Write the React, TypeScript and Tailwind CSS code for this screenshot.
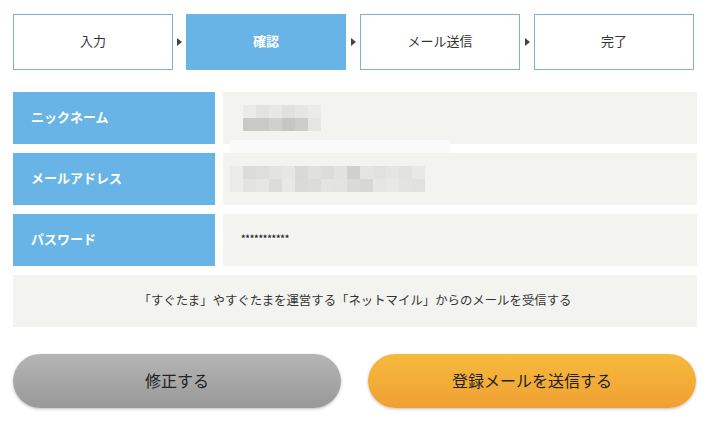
import React from "react";

const nickTop = ["#ebebe8", "#e3e3e0", "#e8e8e5", "#e1e1de", "#e6e6e3", "#ebebe8"];
const nickBot = ["#c9c9c6", "#c9c9c6", "#d0d0cd", "#c6c6c3", "#cdcdca", "#e6e6e3"];
const mailTop = ["#ececea", "#dcdcd9", "#dededb", "#e3e3e0", "#e6e6e3", "#d9d9d6", "#e0e0dd", "#dcdcd9", "#e2e2df", "#d0d0cd", "#e4e4e1", "#e1e1de", "#e5e5e2", "#e2e2df", "#e8e8e5"];
const mailBot = ["#ececea", "#e3e3e0", "#e6e6e3", "#dcdcd9", "#e8e8e5", "#dadad7", "#dcdcd9", "#e4e4e1", "#e3e3e0", "#dadad7", "#d7d7d4", "#e6e6e3", "#e8e8e5", "#e3e3e0", "#e1e1de"];

function Mosaic({ top, bot }: { top: string[]; bot: string[] }) {
  return (
    <div className="flex flex-col">
      <div className="flex">
        {top.map((c, i) => (
          <div key={i} className="w-[13px] h-[13px]" style={{ background: c }} />
        ))}
      </div>
      <div className="flex">
        {bot.map((c, i) => (
          <div key={i} className="w-[13px] h-[13px]" style={{ background: c }} />
        ))}
      </div>
    </div>
  );
}

function Arrow({ w }: { w: string }) {
  return (
    <div className={`${w} flex items-center justify-center`}>
      <div className="w-0 h-0 border-y-[4px] border-y-transparent border-l-[5px] border-l-[#444]" />
    </div>
  );
}

function Step({ label, active }: { label: string; active?: boolean }) {
  return (
    <div
      className={
        active
          ? "w-[160px] h-[56px] flex items-center justify-center pb-[2px] bg-[#68b4e6] text-white font-bold text-[13px]"
          : "w-[160px] h-[56px] flex items-center justify-center pb-[2px] border border-[#7db2d2] bg-white text-[#333] text-[13px]"
      }
    >
      {label}
    </div>
  );
}

function Label({ text }: { text: string }) {
  return (
    <div className="w-[202px] h-full bg-[#68b4e6] flex items-center pl-[18px] pb-[3px] text-white font-bold text-[13px]">
      {text}
    </div>
  );
}

export default function App() {
  return (
    <div
      className="w-[708px] h-[424px] bg-white overflow-hidden"
      style={{ fontFamily: '"Noto Sans CJK JP", "Noto Sans", sans-serif' }}
    >
      <div className="flex pt-[14px] pl-[13px]">
        <Step label="入力" />
        <Arrow w="w-[13px]" />
        <Step label="確認" active />
        <Arrow w="w-[14px]" />
        <Step label="メール送信" />
        <Arrow w="w-[14px]" />
        <Step label="完了" />
      </div>

      <div className="mt-[22px] pl-[13px] w-[697px] flex flex-col gap-[9px]">
        <div className="flex h-[52px] gap-[8px]">
          <Label text="ニックネーム" />
          <div className="relative flex-1 bg-[#f3f3f0] flex items-center pl-[20px]">
            <Mosaic top={nickTop} bot={nickBot} />
            <div className="absolute left-[7px] top-[48px] w-[220px] h-[13px] bg-[#fafafa]" />
          </div>
        </div>
        <div className="flex h-[52px] gap-[8px]">
          <Label text="メールアドレス" />
          <div className="relative flex-1 bg-[#f3f3f0] flex items-center pl-[7px]">
            <Mosaic top={mailTop} bot={mailBot} />
          </div>
        </div>
        <div className="flex h-[52px] gap-[8px]">
          <Label text="パスワード" />
          <div className="flex-1 bg-[#f3f3f0] flex items-center pl-[18px] pb-[3px]">
            <span className="text-[9px] font-bold text-[#222] tracking-[-0.2px]">***********</span>
          </div>
        </div>
        <div className="h-[52px] bg-[#f3f3f0] flex items-center justify-center pb-[2px] text-[12.4px] text-[#333]">
          「すぐたま」やすぐたまを運営する「ネットマイル」からのメールを受信する
        </div>
      </div>

      <div className="flex gap-[27px] pl-[13px] mt-[27px]">
        <button className="w-[328px] h-[54px] pb-[2px] rounded-full bg-gradient-to-b from-[#b5b5b5] to-[#999999] shadow-[0_1px_3px_rgba(0,0,0,0.25)] text-[16px] text-[#222] flex items-center justify-center">
          修正する
        </button>
        <button className="w-[328px] h-[54px] pb-[2px] rounded-full bg-gradient-to-b from-[#f6ba3c] to-[#f0a033] shadow-[0_1px_3px_rgba(0,0,0,0.25)] text-[16px] text-[#222] flex items-center justify-center">
          登録メールを送信する
        </button>
      </div>
    </div>
  );
}
